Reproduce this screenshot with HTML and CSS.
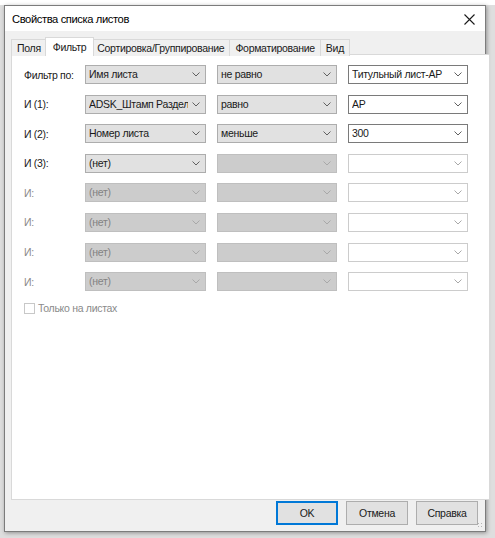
FILE: index.html
```html
<!DOCTYPE html>
<html lang="ru">
<head>
<meta charset="utf-8">
<title>Свойства списка листов</title>
<link rel="stylesheet" href="styles.css">
</head>
<body>
<div class="desk">
  <div class="window">
    <div class="titlebar">
      <span class="title">Свойства списка листов</span>
      <svg class="close" width="11" height="11" viewBox="0 0 11 11"><path d="M0.5 0.5 L10.5 10.5 M10.5 0.5 L0.5 10.5" stroke="#1a1a1a" stroke-width="1.1" fill="none"/></svg>
    </div>
    <div class="client">
      <div class="tabs">
        <div class="tab">Поля</div>
        <div class="tab active">Фильтр</div>
        <div class="tab">Сортировка/Группирование</div>
        <div class="tab">Форматирование</div>
        <div class="tab">Вид</div>
      </div>
      <div class="panel">
        <div class="row">
          <span class="lbl">Фильтр по:</span>
          <div class="combo gray"><span class="clip">Имя листа</span><svg class="chev" viewBox="0 0 8 5"><polyline points="0.5,0.5 4,4 7.5,0.5"/></svg></div>
          <div class="combo gray"><span class="clip">не равно</span><svg class="chev" viewBox="0 0 8 5"><polyline points="0.5,0.5 4,4 7.5,0.5"/></svg></div>
          <div class="combo edit"><span class="clip">Титульный лист-АР</span><svg class="chev" viewBox="0 0 8 5"><polyline points="0.5,0.5 4,4 7.5,0.5"/></svg></div>
        </div>
        <div class="row">
          <span class="lbl">И (1):</span>
          <div class="combo gray"><span class="clip">ADSK_Штамп Раздел п</span><svg class="chev" viewBox="0 0 8 5"><polyline points="0.5,0.5 4,4 7.5,0.5"/></svg></div>
          <div class="combo gray"><span class="clip">равно</span><svg class="chev" viewBox="0 0 8 5"><polyline points="0.5,0.5 4,4 7.5,0.5"/></svg></div>
          <div class="combo edit"><span class="clip">АР</span><svg class="chev" viewBox="0 0 8 5"><polyline points="0.5,0.5 4,4 7.5,0.5"/></svg></div>
        </div>
        <div class="row">
          <span class="lbl">И (2):</span>
          <div class="combo gray"><span class="clip">Номер листа</span><svg class="chev" viewBox="0 0 8 5"><polyline points="0.5,0.5 4,4 7.5,0.5"/></svg></div>
          <div class="combo gray"><span class="clip">меньше</span><svg class="chev" viewBox="0 0 8 5"><polyline points="0.5,0.5 4,4 7.5,0.5"/></svg></div>
          <div class="combo edit"><span class="clip">300</span><svg class="chev" viewBox="0 0 8 5"><polyline points="0.5,0.5 4,4 7.5,0.5"/></svg></div>
        </div>
        <div class="row">
          <span class="lbl">И (3):</span>
          <div class="combo gray"><span class="clip">(нет)</span><svg class="chev" viewBox="0 0 8 5"><polyline points="0.5,0.5 4,4 7.5,0.5"/></svg></div>
          <div class="combo gray off"><svg class="chev" viewBox="0 0 8 5"><polyline points="0.5,0.5 4,4 7.5,0.5"/></svg></div>
          <div class="combo edit off"><svg class="chev" viewBox="0 0 8 5"><polyline points="0.5,0.5 4,4 7.5,0.5"/></svg></div>
        </div>
        <div class="row dim">
          <span class="lbl">И:</span>
          <div class="combo gray off"><span class="clip">(нет)</span><svg class="chev" viewBox="0 0 8 5"><polyline points="0.5,0.5 4,4 7.5,0.5"/></svg></div>
          <div class="combo gray off"><svg class="chev" viewBox="0 0 8 5"><polyline points="0.5,0.5 4,4 7.5,0.5"/></svg></div>
          <div class="combo edit off"><svg class="chev" viewBox="0 0 8 5"><polyline points="0.5,0.5 4,4 7.5,0.5"/></svg></div>
        </div>
        <div class="row dim">
          <span class="lbl">И:</span>
          <div class="combo gray off"><span class="clip">(нет)</span><svg class="chev" viewBox="0 0 8 5"><polyline points="0.5,0.5 4,4 7.5,0.5"/></svg></div>
          <div class="combo gray off"><svg class="chev" viewBox="0 0 8 5"><polyline points="0.5,0.5 4,4 7.5,0.5"/></svg></div>
          <div class="combo edit off"><svg class="chev" viewBox="0 0 8 5"><polyline points="0.5,0.5 4,4 7.5,0.5"/></svg></div>
        </div>
        <div class="row dim">
          <span class="lbl">И:</span>
          <div class="combo gray off"><span class="clip">(нет)</span><svg class="chev" viewBox="0 0 8 5"><polyline points="0.5,0.5 4,4 7.5,0.5"/></svg></div>
          <div class="combo gray off"><svg class="chev" viewBox="0 0 8 5"><polyline points="0.5,0.5 4,4 7.5,0.5"/></svg></div>
          <div class="combo edit off"><svg class="chev" viewBox="0 0 8 5"><polyline points="0.5,0.5 4,4 7.5,0.5"/></svg></div>
        </div>
        <div class="row dim">
          <span class="lbl">И:</span>
          <div class="combo gray off"><span class="clip">(нет)</span><svg class="chev" viewBox="0 0 8 5"><polyline points="0.5,0.5 4,4 7.5,0.5"/></svg></div>
          <div class="combo gray off"><svg class="chev" viewBox="0 0 8 5"><polyline points="0.5,0.5 4,4 7.5,0.5"/></svg></div>
          <div class="combo edit off"><svg class="chev" viewBox="0 0 8 5"><polyline points="0.5,0.5 4,4 7.5,0.5"/></svg></div>
        </div>
        <label class="check dim"><span class="box"></span>Только на листах</label>
      </div>
      <div class="buttons">
        <div class="btn default">OK</div>
        <div class="btn">Отмена</div>
        <div class="btn">Справка</div>
      </div>
      <div class="grip"></div>
    </div>
  </div>
</div>
</body>
</html>
```

FILE: styles.css
```css
html, body {
  margin: 0;
  padding: 0;
}

body {
  width: 495px;
  height: 538px;
  overflow: hidden;
  background: linear-gradient(to bottom, #ffffff 0, #ffffff 5px, #dedede 5px);
  font-family: "Liberation Sans", Arial, sans-serif;
  font-size: 10.5px;
  letter-spacing: -0.3px;
  color: #1a1a1a;
}

.desk {
  padding: 5px 0 0 4px;
}

.window {
  width: 480px;
  height: 525px;
  border: 1px solid #7c7c7c;
  background: #f0f0f0;
  box-shadow: 1px 1px 4px rgba(0, 0, 0, 0.35);
  display: flex;
  flex-direction: column;
  position: relative;
}

.titlebar {
  height: 25px;
  background: #ffffff;
  display: flex;
  align-items: center;
  justify-content: space-between;
  padding: 0 10px 0 7px;
}

.title {
  font-size: 11.2px;
  letter-spacing: -0.4px;
  color: #000;
  margin-top: 1px;
}

.close {
  display: block;
  margin-top: 1px;
}

.client {
  flex: 1;
  padding: 7px 7px 0 6px;
  display: flex;
  flex-direction: column;
}

.tabs {
  display: flex;
  padding-left: 1px;
  height: 16px;
  position: relative;
  z-index: 1;
}

.tab {
  height: 16px;
  margin-top: 1px;
  padding: 0 5px;
  border: 1px solid #d9d9d9;
  border-bottom: none;
  margin-left: -1px;
  background: #f0f0f0;
  line-height: 17px;
  color: #1a1a1a;
  white-space: nowrap;
}

.tab.active {
  background: #ffffff;
  height: 18px;
  margin-top: -1px;
  padding: 0 7px;
  margin-left: -2px;
  margin-right: -2px;
  position: relative;
  z-index: 2;
  line-height: 18px;
}

.panel {
  height: 434px;
  width: 465px;
  background: #ffffff;
  border: 1px solid #d9d9d9;
  padding: 10px 0 0 12px;
  box-sizing: content-box;
}

.row {
  display: flex;
  align-items: center;
  height: 19px;
  margin-bottom: 10.6px;
}

.lbl {
  width: 61px;
  flex: none;
  white-space: nowrap;
}

.combo {
  position: relative;
  height: 19px;
  box-sizing: border-box;
  border: 1px solid #adadad;
  background: #e1e1e1;
  width: 120px;
  margin-right: 11px;
  padding: 0 17px 0 3px;
  line-height: 17px;
  flex: none;
}

.combo:first-of-type {
  width: 121px;
}

.combo.edit {
  background: #ffffff;
  border-color: #7a7a7a;
}

.combo.gray.off {
  background: #cccccc;
  border-color: #bfbfbf;
  color: #838383;
}

.combo.edit.off {
  background: #ffffff;
  border-color: #cccccc;
}

.clip {
  display: block;
  overflow: hidden;
  white-space: nowrap;
}

.chev {
  position: absolute;
  right: 5px;
  top: 6px;
  width: 8px;
  height: 5px;
  fill: none;
  stroke: #606060;
  stroke-width: 1;
}

.combo.off .chev {
  stroke: #a8a8a8;
}

.dim .lbl,
.check.dim {
  color: #8a8a8a;
}

.check {
  display: flex;
  align-items: center;
  margin-top: 9px;
  height: 13px;
}

.box {
  width: 11px;
  height: 11px;
  box-sizing: border-box;
  border: 1px solid #c8c8c8;
  background: #fff;
  margin-right: 3px;
}

.buttons {
  display: flex;
  justify-content: flex-end;
  gap: 8px;
  margin-top: 1px;
}

.btn {
  width: 62px;
  height: 24px;
  box-sizing: border-box;
  border: 1px solid #adadad;
  background: #e1e1e1;
  text-align: center;
  line-height: 22px;
  color: #1a1a1a;
}

.btn.default {
  border: 2px solid #0078d7;
  line-height: 20px;
}

.grip {
  position: absolute;
  right: 1px;
  bottom: 2px;
  width: 7px;
  height: 7px;
  background-image: radial-gradient(circle, #b4b4b4 0.8px, transparent 1px);
  background-size: 3px 3px;
}
```
